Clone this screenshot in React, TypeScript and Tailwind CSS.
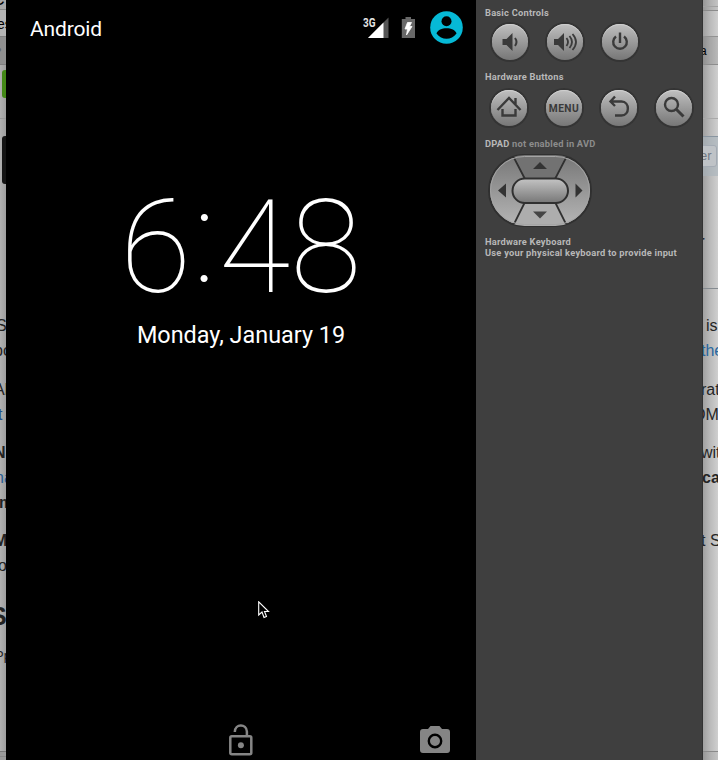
import React from 'react';

const sans = "font-['Liberation_Sans',Arial,sans-serif]";

function Line({ h, cls = '', children }: { h: string; cls?: string; children?: React.ReactNode }) {
  return <div className={`${h} shrink-0 whitespace-nowrap overflow-hidden ${cls}`}>{children}</div>;
}

function LeftPage() {
  return (
    <div className={`w-[6px] h-full shrink-0 overflow-hidden flex flex-col bg-linear-to-r from-[#b2b2b2] to-[#9e9e9e] text-[16px] leading-[25px] text-[#222] ${sans}`}>
      <Line h="h-[10px]" cls="bg-[#aaa] border-b border-[#888] leading-[0px] text-black"><span className="-ml-[7px]">C</span></Line>
      <Line h="h-[26px]" cls="bg-[#b4b4b4] text-[14px] leading-[28px] text-black"><span className="-ml-[3px]">es</span></Line>
      <Line h="h-[29px]" cls="bg-[#909090] border-y border-[#808080] text-[#666]"><span className="-ml-[4px]">•</span></Line>
      <Line h="h-[5px]" />
      <div className="h-[28px] ml-[2px] shrink-0 rounded-l-[3px] bg-[#438816]" />
      <Line h="h-[20px]" />
      <Line h="h-[18px]" cls="border-t border-[#999]" />
      <div className="h-[48px] ml-[2px] shrink-0 rounded-l-[3px] bg-[#141414]" />
      <Line h="h-[129px]" />
      <Line h="h-[25px]"><span className="-ml-[4px]">Su</span></Line>
      <Line h="h-[25px]"><span className="-ml-[6px]">po</span></Line>
      <Line h="h-[14px]" />
      <Line h="h-[25px]"><span className="-ml-[6px]">Al</span></Line>
      <Line h="h-[25px]" cls="text-[#23528a]"><span className="-ml-[2px]">t</span></Line>
      <Line h="h-[13px]" />
      <Line h="h-[25px]" cls="font-bold"><span className="-ml-[6px]">N</span></Line>
      <Line h="h-[25px]" cls="text-[#285d94]"><span className="-ml-[5px]">na</span></Line>
      <Line h="h-[25px]" cls="font-bold"><span className="-ml-[1px]">m</span></Line>
      <Line h="h-[13px]" />
      <Line h="h-[25px]" cls="font-bold"><span className="-ml-[6px]">M</span></Line>
      <Line h="h-[25px]"><span className="-ml-[2px]">o</span></Line>
      <Line h="h-[22px]" />
      <Line h="h-[32px]" cls="font-bold text-[25px] leading-[32px]"><span className="-ml-[10px]">S</span></Line>
      <Line h="h-[12px]" />
      <Line h="h-[24px]" cls="text-[13px] leading-[24px]"><span className="-ml-[5px]">Pp</span></Line>
      <Line h="h-[83px]" />
      <Line h="h-[9px]" cls="border-t border-[#777] bg-[#999]"><div className="mt-[4px] border-t border-[#888]" /></Line>
    </div>
  );
}

function RightPage() {
  return (
    <div className={`w-[15px] h-full shrink-0 overflow-hidden flex flex-col bg-linear-to-r from-[#a0a0a0] via-[#bbb] to-[#cfcfcf] text-[16px] leading-[25px] text-[#252525] ${sans}`}>
      <Line h="h-[11px]" cls="border-b border-[#8b8b8b] bg-black/5"><div className="h-[7px] border-b border-[#a2a2a2]" /></Line>
      <Line h="h-[26px]" cls="border-b border-[#929292]" />
      <Line h="h-[28px]" cls="bg-black/10 border-b border-[#8d8d8d] text-[12px] leading-[28px] text-black"><span className="-ml-[3px]">a</span></Line>
      <Line h="h-[53px]" />
      <Line h="h-[18px]" cls="border-t border-[#aaa]" />
      <Line h="h-[40px]" cls="bg-[#a7b2bb]/60 border-t border-[#8995a0]">
        <div className="w-[18px] h-[22px] -ml-[4px] mt-[8px] rounded-[3px] border border-[#a4abb4] bg-[#bfc3c7] text-[13px] leading-[20px] text-[#6f7984]"><span>er</span></div>
      </Line>
      <Line h="h-[54px]" />
      <Line h="h-[25px]" cls="text-[20px] text-[#25252d]"><span className="-ml-[5px]">r</span></Line>
      <Line h="h-[33px]" />
      <Line h="h-[25px]" cls="border-t border-[#858b90]" />
      <Line h="h-[25px]"><span className="ml-[3px]">is</span></Line>
      <Line h="h-[25px]" cls="text-[#28679f]"><span className="-ml-[2px]">the</span></Line>
      <Line h="h-[14px]" />
      <Line h="h-[25px]"><span className="-ml-[2px]">rat</span></Line>
      <Line h="h-[25px]"><span className="-ml-[9px]">DM</span></Line>
      <Line h="h-[13px]" />
      <Line h="h-[25px]"><span className="-ml-[2px]">with</span></Line>
      <Line h="h-[25px]" cls="font-bold"><span className="-ml-[1px]">ca</span></Line>
      <Line h="h-[38px]" />
      <Line h="h-[25px]"><span className="-ml-[2px]">t S</span></Line>
      <Line h="h-[198px]" />
      <Line h="h-[9px]" cls="border-t border-[#8a8a8a] bg-black/5" />
    </div>
  );
}

function Signal() {
  return (
    <svg width="26" height="24" viewBox="0 0 26 24" className="overflow-visible">
      <path d="M25.500 3.500V24H5z" fill="#555" />
      <path d="M20.500 8.500V24H5z" fill="#fff" />
      <text x="0" y="12.500" fill="#e4e4e4" fontFamily="Roboto, sans-serif" fontSize="12" fontWeight="700" textLength="12.500" lengthAdjust="spacingAndGlyphs">3G</text>
    </svg>
  );
}

function Phone() {
  return (
    <div className="relative w-[470px] h-full shrink-0 bg-black text-white font-[Roboto,sans-serif] flex flex-col">
      <div className="h-[56px] flex pl-[24px]">
        <div className="w-[333px] pt-[15px] text-[21px] tracking-[-0.150px] leading-[28px]">Android</div>
        <div className="w-[38px] pt-[14px]"><Signal /></div>
        <svg className="mt-[17px]" width="14" height="21" viewBox="0 0 14 21">
          <path d="M4.500 0h5.500v2h4v19H.8V2h3.700z" fill="#686868" />
          <path d="M6.500 5.500h4L8.500 9.500H11L5.500 18 6.500 12H4z" fill="#fff" stroke="#fff" strokeWidth=".8" />
        </svg>
        <svg className="ml-[15px] mt-[11px]" width="33" height="33" viewBox="0 0 33 33">
          <circle cx="16.500" cy="16.500" r="16.300" fill="#06b9d6" />
          <circle cx="16.500" cy="10.300" r="5" fill="#000" />
          <path d="M6.500 22.500C8.500 15.500 24.500 15.500 26.500 22.500C21.500 29.500 11.500 29.500 6.500 22.500z" fill="#000" />
        </svg>
      </div>
      <div className="mt-[114px] h-[156px] flex leading-[156px] text-[130px] font-thin whitespace-nowrap">
        <span className="ml-[114px] w-[73px] shrink-0">6</span>
        <span className="w-[26px] -mt-[10px] shrink-0">:</span>
        <span>48</span>
      </div>
      <div className="h-[30px] text-center text-[23.4px] leading-[30px] -mt-[6px]">Monday, January 19</div>
      <div className="grow" />
      <div className="h-[40px] flex pl-[222px]">
        <svg width="26" height="34" viewBox="0 0 26 34" className="mt-[3px]" fill="none" stroke="#858585" strokeWidth="2.500">
          <rect x="2.300" y="13.300" width="21" height="18" rx="1.500" />
          <path d="M6.800 9C7 .5 18.500 .5 18.900 8.500V13" />
          <circle cx="12.900" cy="22.300" r="3" fill="#858585" stroke="none" />
        </svg>
        <svg width="30" height="27" viewBox="0 0 30 27" className="ml-[166px] mt-[6px]">
          <path d="M10.500 0h9L22 3h5q3 0 3 3v18q0 3-3 3H3q-3 0-3-3V6q0-3 3-3h5z" fill="#858585" />
          <circle cx="15" cy="15" r="6.200" fill="#858585" stroke="#000" strokeWidth="2.400" />
        </svg>
      </div>
      <svg className="absolute left-[252px] top-[601px]" width="12" height="18" viewBox="0 0 12 18">
        <path d="M.700 .8V14L4 11l2 5.500 2.500-1L6.500 10.500H10.500z" fill="#000" stroke="#fff" strokeWidth="1.100" />
      </svg>
    </div>
  );
}

function Round({ children }: { children?: React.ReactNode }) {
  return (
    <div className="size-[40px] shrink-0 rounded-full bg-[#343434] p-[2px]">
      <div className="size-[36px] rounded-full bg-linear-to-b from-[#c0c0c0] to-[#777] flex items-center justify-center text-[#3a3a3a] shadow-[inset_0_1px_0_#cfcfcf]">
        {children}
      </div>
    </div>
  );
}

function Icon({ children }: { children: React.ReactNode }) {
  return <svg width="30" height="30" viewBox="0 0 30 30" fill="none" stroke="currentColor" strokeWidth="2.400" className="shrink-0">{children}</svg>;
}

function Label({ w, children }: { w: string; children: React.ReactNode }) {
  return <div className={`${w} h-[11px] text-[9.3px] leading-[11px] tracking-[0.230px] font-bold whitespace-nowrap`}>{children}</div>;
}

function DPad() {
  return (
    <svg width="106" height="76" viewBox="0 0 106 76" className="ml-[11px] mt-[4px]">
      <defs>
        <linearGradient id="pad" x1="0" y1="0" x2="0" y2="1"><stop stopColor="#777" /><stop offset="1" stopColor="#b6b6b6" /></linearGradient>
        <linearGradient id="center" x1="0" y1="0" x2="0" y2="1"><stop stopColor="#c4c4c4" /><stop offset="1" stopColor="#777" /></linearGradient>
        <clipPath id="outline"><rect x="2" y="2" width="102" height="71" rx="35.500" /></clipPath>
      </defs>
      <rect x="2" y="2" width="102" height="71" rx="35.500" fill="url(#pad)" stroke="#303030" strokeWidth="2" />
      <g clipPath="url(#outline)">
        <path d="M25 1h56L68 26H38z" fill="#727272" stroke="#303030" strokeWidth="1.800" />
        <path d="M25 75h56L68 49H38z" fill="#adadad" stroke="#303030" strokeWidth="1.800" />
      </g>
      <rect x="3.500" y="3.500" width="99" height="68" rx="34" fill="none" stroke="#a5a5a5" strokeWidth="1" />
      <rect x="25.500" y="25.500" width="55.500" height="24.500" rx="12.250" fill="url(#center)" stroke="#303030" strokeWidth="2" />
      <path d="M46 16h14L53 9zM11 37.500l8-7v14zM95.500 37.500l-7-7v14z" fill="#333" />
      <path d="M46 58.500h14l-7 7z" fill="#454545" />
    </svg>
  );
}

function Controls() {
  return (
    <div className="w-[227px] h-full shrink-0 bg-[#3f3f3f] border-r border-[#333] text-[#b8b8b8] font-[Roboto,sans-serif] flex flex-col pt-[7px]">
      <div className="pl-[9px]"><Label w="w-[64px]">Basic Controls</Label></div>
      <div className="flex gap-[15px] pl-[14px] mt-[4px]">
        <Round><Icon><path d="M7.500 12h4l6-6v18l-6-6h-4z" fill="currentColor" stroke="none" /><path d="M20 11q3 4 0 8" strokeWidth="2" /></Icon></Round>
        <Round><Icon><path d="M4 12h4l6-6v18l-6-6H4z" fill="currentColor" stroke="none" /><path d="M16.500 11q3 4 0 8M19.500 9q5 6 0 12M22.500 7q7 8 0 16" strokeWidth="1.800" /></Icon></Round>
        <Round><Icon><path d="M11 9.500a6.800 6.800 0 1 0 8 0M15 5.500V16" /></Icon></Round>
      </div>
      <div className="pl-[9px] mt-[9px]"><Label w="w-[79px]">Hardware Buttons</Label></div>
      <div className="flex gap-[15px] pl-[13px] mt-[6px]">
        <Round><Icon><path d="M3.500 17L15 5l11.500 12M8.500 16v6.500h13V16M21.500 11V5" /></Icon></Round>
        <Round><span className="text-[10.200px] font-bold tracking-[0.500px] mt-[2px]">MENU</span></Round>
        <Round><Icon><path d="M6 8.500h11.500c8.500 0 8.500 14 0 14H11M11 3.500l-4.500 5 4.500 4.500" /></Icon></Round>
        <Round><Icon><circle cx="12.500" cy="11.500" r="6.500" /><path d="M17.500 16.500l7 7" strokeWidth="3" /></Icon></Round>
      </div>
      <div className="pl-[9px] mt-[10px]"><Label w="w-[110px]">DPAD <span className="text-[#8c8c8c]">not enabled in AVD</span></Label></div>
      <DPad />
      <div className="pl-[9px] mt-[7px]"><Label w="w-[86px]">Hardware Keyboard</Label><Label w="w-[192px]">Use your physical keyboard to provide input</Label></div>
    </div>
  );
}

export default function App() {
  return (
    <div className="w-[718px] h-[760px] overflow-hidden flex bg-[#aaa]">
      <LeftPage />
      <Phone />
      <Controls />
      <RightPage />
    </div>
  );
}
